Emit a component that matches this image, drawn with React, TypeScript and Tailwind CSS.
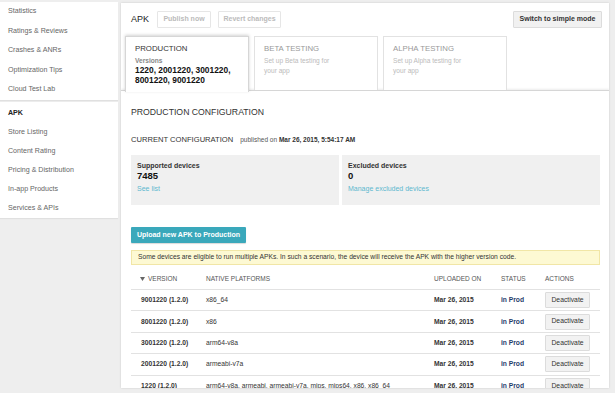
import React from "react";

const sideA = ["Statistics", "Ratings & Reviews", "Crashes & ANRs", "Optimization Tips", "Cloud Test Lab"];
const sideB = ["APK", "Store Listing", "Content Rating", "Pricing & Distribution", "In-app Products", "Services & APIs"];

const rows = [
  ["9001220 (1.2.0)", "x86_64"],
  ["8001220 (1.2.0)", "x86"],
  ["3001220 (1.2.0)", "arm64-v8a"],
  ["2001220 (1.2.0)", "armeabi-v7a"],
  ["1220 (1.2.0)", "arm64-v8a, armeabi, armeabi-v7a, mips, mips64, x86, x86_64"],
];

function Row({ v, p }: { v: string; p: string }) {
  return (
    <div className="shrink-0 grid grid-cols-[75px_228px_67px_44px_55px] h-[21.4px] border-b border-[#e2e2e2] items-center text-[6.7px] text-[#333]">
      <div className="pl-[10px] font-bold">{v}</div>
      <div>{p}</div>
      <div className="font-bold">Mar 26, 2015</div>
      <div className="font-bold text-[#1f3b6b]">in Prod</div>
      <div>
        <div className="w-[45px] h-[16px] flex items-center justify-center bg-[#f2f2f2] border border-[#dcdcdc] rounded-[1px] text-[6.8px] text-[#333]">
          Deactivate
        </div>
      </div>
    </div>
  );
}

export default function App() {
  return (
    <div
      className="w-[615px] h-[393px] bg-[#eeeeee] flex overflow-hidden"
      style={{ fontFamily: '"Liberation Sans", Arial, sans-serif' }}
    >
      {/* Sidebar */}
      <div className="w-[118px] pt-[2px] flex flex-col gap-[2px] shrink-0">
        <div className="shrink-0 bg-white flex flex-col shadow-[0_1px_1px_rgba(0,0,0,0.06)]">
          {sideA.map((s) => (
            <div key={s} className="shrink-0 h-[19.5px] flex items-center pl-[8px] text-[7.1px] text-[#666]">
              {s}
            </div>
          ))}
        </div>
        <div className="shrink-0 bg-white flex flex-col pt-[2px] shadow-[0_1px_1px_rgba(0,0,0,0.06)]">
          {sideB.map((s, i) => (
            <div
              key={s}
              className={
                "shrink-0 h-[19px] flex items-center pl-[8px] text-[7.1px] " +
                (i === 0 ? "font-bold text-[#222]" : "text-[#666]")
              }
            >
              {s}
            </div>
          ))}
        </div>
      </div>

      {/* Main */}
      <div className="ml-[3px] mt-[3px] w-[488px] h-[385px] bg-white shrink-0 flex flex-col overflow-hidden shadow-[0_0_2px_rgba(0,0,0,0.15)]">
        {/* Header */}
        <div className="shrink-0 h-[33px] flex items-center pl-[10px] pr-[7px]">
          <div className="text-[9px] text-[#222] mr-[8px]">APK</div>
          <div className="h-[17px] w-[54px] flex items-center justify-center border border-[#e6e6e6] rounded-[1px] text-[7px] font-bold text-[#bbb] mr-[7px]">
            Publish now
          </div>
          <div className="h-[17px] w-[63px] flex items-center justify-center border border-[#e6e6e6] rounded-[1px] text-[7px] font-bold text-[#bbb]">
            Revert changes
          </div>
          <div className="ml-auto h-[17px] w-[89px] flex items-center justify-center bg-[#f1f1f1] border border-[#dcdcdc] rounded-[1px] text-[7px] font-bold text-[#333]">
            Switch to simple mode
          </div>
        </div>

        {/* Tabs */}
        <div className="shrink-0 h-[54px] flex items-start pl-[4px] gap-[5px] relative z-10">
          <div className="w-[124px] h-[56px] bg-white border border-[#d6d6d6] border-b-0 shadow-[0_-1px_3px_rgba(0,0,0,0.18)] pl-[9px] pt-[6px]">
            <div className="text-[7.8px] text-[#333] leading-[11px]">PRODUCTION</div>
            <div className="text-[6.6px] font-bold text-[#888] leading-[10px] mt-[2px]">Versions</div>
            <div className="text-[8.4px] font-bold text-[#111] leading-[9.5px]">
              1220, 2001220, 3001220,
              <br />
              8001220, 9001220
            </div>
          </div>
          {[
            ["BETA TESTING", "Set up Beta testing for"],
            ["ALPHA TESTING", "Set up Alpha testing for"],
          ].map(([t, d]) => (
            <div key={t} className="w-[124px] h-[54px] bg-white border border-[#e2e2e2] border-b-0 pl-[9px] pt-[6px]">
              <div className="text-[7.8px] text-[#999] leading-[11px]">{t}</div>
              <div className="text-[6.6px] text-[#bbb] leading-[9.5px] mt-[2px]">
                {d}
                <br />
                your app
              </div>
            </div>
          ))}
        </div>

        {/* Content */}
        <div className="shrink-0 border-t border-[#d6d6d6] shadow-[0_-1px_2px_rgba(0,0,0,0.08)] pl-[10px] pr-[9px] flex flex-col">
          <div className="shrink-0 h-[44px] flex items-center text-[8.7px] text-[#333]">PRODUCTION CONFIGURATION</div>
          <div className="shrink-0 h-[10px] flex items-center">
            <span className="text-[7.6px] text-[#333]">CURRENT CONFIGURATION</span>
            <span className="ml-[7px] text-[6.5px] text-[#555]">
              published on <span className="font-bold text-[#333]">Mar 26, 2015, 5:54:17 AM</span>
            </span>
          </div>

          <div className="shrink-0 mt-[10px] h-[50px] flex gap-[3px]">
            <div className="w-[208px] bg-[#f0f0f0] pl-[6px] pt-[6px]">
              <div className="text-[7px] font-bold text-[#333] leading-[9px]">Supported devices</div>
              <div className="text-[9.5px] font-bold text-[#111] leading-[12px]">7485</div>
              <div className="text-[7px] text-[#5db8cf] leading-[9px] mt-[2px]">See list</div>
            </div>
            <div className="flex-1 bg-[#f0f0f0] pl-[6px] pt-[6px]">
              <div className="text-[7px] font-bold text-[#333] leading-[9px]">Excluded devices</div>
              <div className="text-[9.5px] font-bold text-[#111] leading-[12px]">0</div>
              <div className="text-[7px] text-[#5db8cf] leading-[9px] mt-[2px]">Manage excluded devices</div>
            </div>
          </div>

          <div className="shrink-0 mt-[22px] w-[115px] h-[16px] bg-[#3aa8bb] rounded-[1px] flex items-center justify-center text-[7px] font-bold text-white shadow-[0_1px_1px_rgba(0,0,0,0.15)]">
            Upload new APK to Production
          </div>

          <div className="shrink-0 mt-[7px] h-[15px] bg-[#fdf9d3] border border-[#f1e6a6] flex items-center pl-[6px] text-[6.7px] text-[#333]">
            Some devices are eligible to run multiple APKs. In such a scenario, the device will receive the APK with the higher version code.
          </div>

          <div className="shrink-0 h-[25px] pt-[3px] grid grid-cols-[75px_228px_67px_44px_55px] items-center border-b border-[#e2e2e2] text-[6.5px] text-[#555]">
            <div className="pl-[9px] flex items-center gap-[3px]">
              <svg width="5" height="4" viewBox="0 0 5 4">
                <path d="M0 0 H5 L2.5 4 Z" fill="#666" />
              </svg>
              <span>VERSION</span>
            </div>
            <div>NATIVE PLATFORMS</div>
            <div>UPLOADED ON</div>
            <div>STATUS</div>
            <div>ACTIONS</div>
          </div>

          {rows.map(([v, p]) => (
            <Row key={v} v={v} p={p} />
          ))}
        </div>
      </div>
    </div>
  );
}
